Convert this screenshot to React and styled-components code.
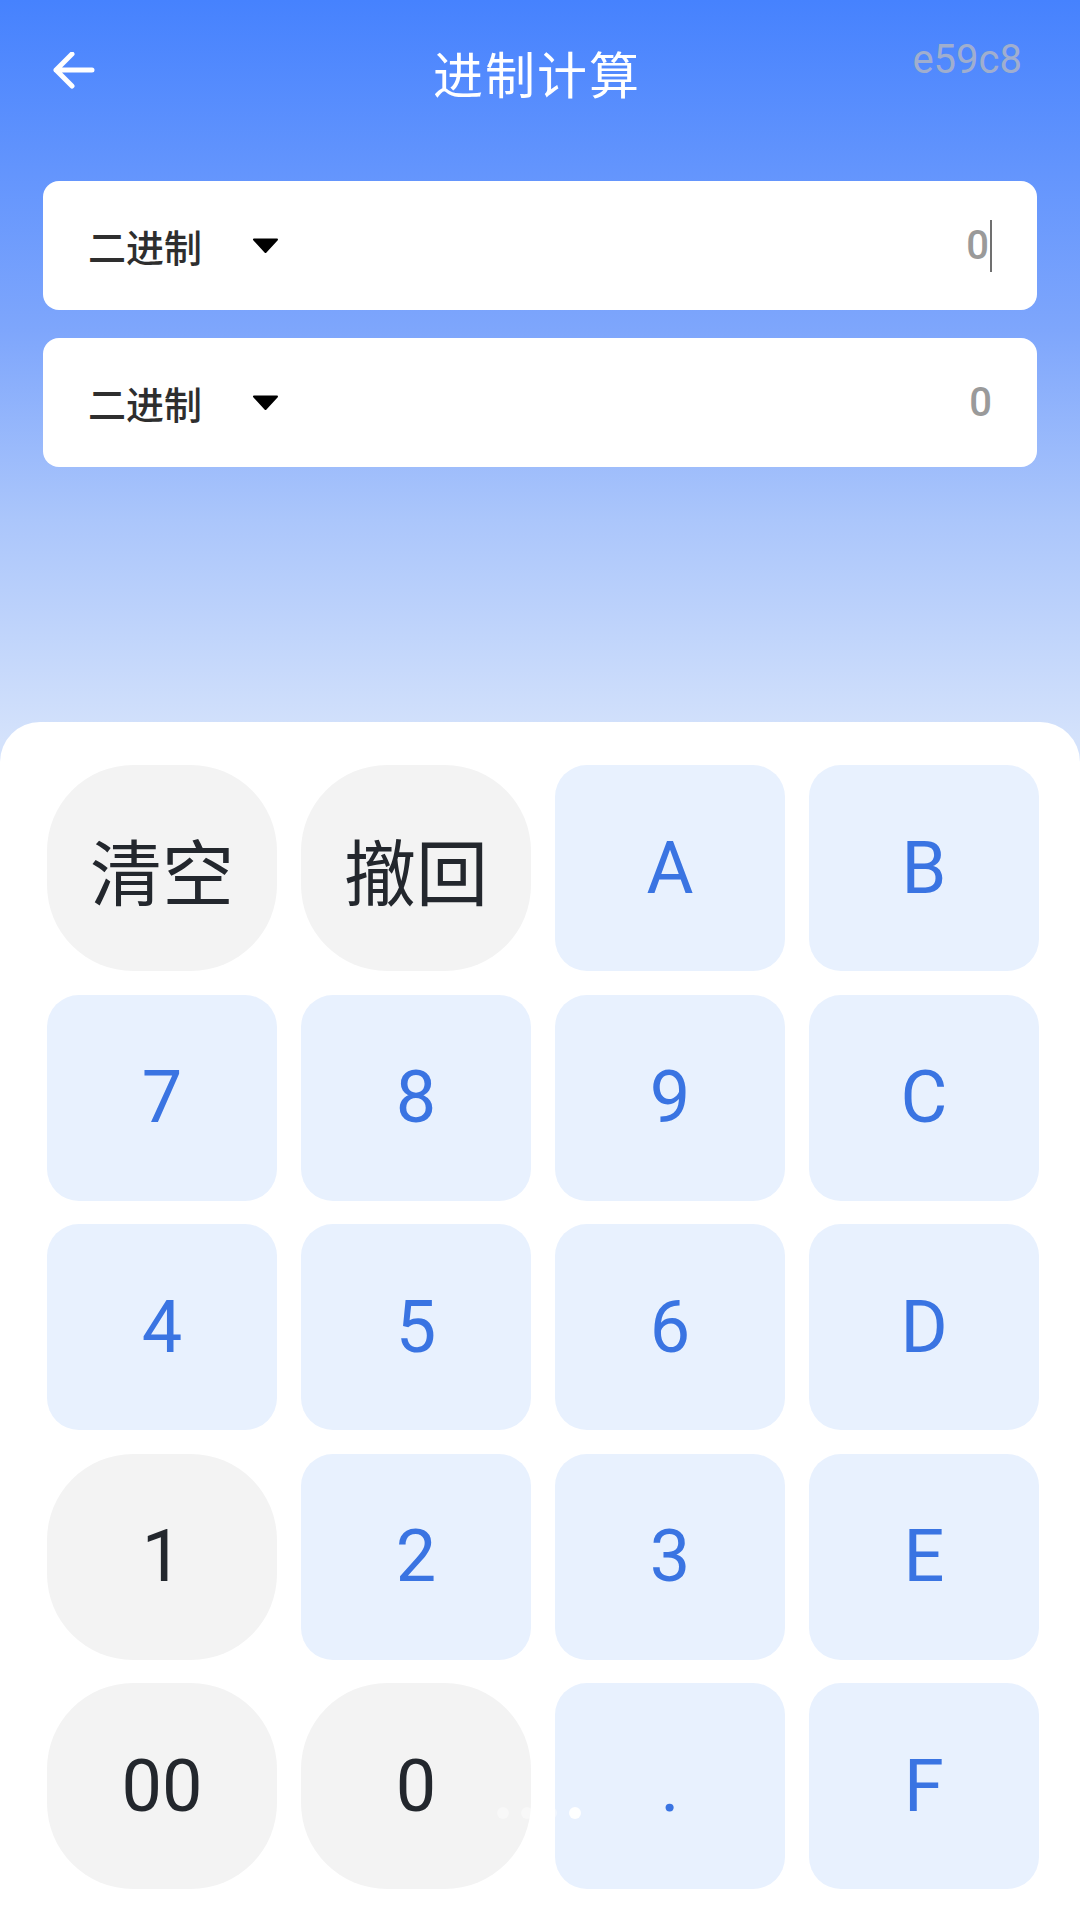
import React from 'react'
import styled, { createGlobalStyle } from 'styled-components'

const GlobalStyle = createGlobalStyle`
  html, body {
    margin: 0;
    padding: 0;
    background: #ffffff;
  }
  * {
    box-sizing: border-box;
  }
`

const Page = styled.div`
  position: relative;
  width: 1080px;
  height: 1920px;
  overflow: hidden;
  display: flex;
  flex-direction: column;
  font-family: Roboto, "Noto Sans CJK SC", sans-serif;
  background: linear-gradient(180deg, #4682fe 0px, #7ea6fc 330px, #abc6fb 520px, #d4e2fb 740px, #d4e2fb 100%);
`

const Header = styled.header`
  display: grid;
  grid-template-columns: 1fr auto 1fr;
  align-items: center;
  height: 143px;
  padding: 0 58px 0 52px;
`

const Back = styled.button`
  justify-self: start;
  width: 44px;
  height: 44px;
  padding: 0;
  border: none;
  background: none;
  display: flex;
  align-items: center;
`

const Title = styled.h1`
  margin: 0;
  font-family: "Noto Sans CJK SC", sans-serif;
  font-size: 50px;
  font-weight: 400;
  color: #ffffff;
  letter-spacing: 2px;
`

const Code = styled.span`
  justify-self: end;
  align-self: start;
  margin-top: 36px;
  font-family: Roboto, sans-serif;
  font-size: 40px;
  color: #a9b3c9;
  opacity: 0.9;
`

const Fields = styled.div`
  display: flex;
  flex-direction: column;
  gap: 28px;
  padding: 38px 43px 0;
`

const Field = styled.div`
  display: flex;
  align-items: center;
  height: 129px;
  padding: 0 45px;
  background: #ffffff;
  border-radius: 16px;
`

const Base = styled.div`
  display: flex;
  align-items: center;
  gap: 50px;
  font-family: "Noto Sans CJK SC", sans-serif;
  font-size: 38px;
  font-weight: 500;
  color: #2e2e2e;
`

const Value = styled.div`
  margin-left: auto;
  display: flex;
  align-items: center;
  font-family: Roboto, sans-serif;
  font-size: 40px;
  font-weight: 500;
  color: #9a9a9a;
`

const Caret = styled.span`
  width: 2px;
  height: 52px;
  margin-left: 1px;
  background: #707070;
`

const Pad = styled.section`
  margin-top: 255px;
  flex: 1;
  background: #ffffff;
  border-radius: 40px 40px 0 0;
  padding: 43px 40px 0 47px;
  display: grid;
  grid-template-columns: repeat(4, 230px);
  grid-auto-rows: 206px;
  column-gap: 24px;
  row-gap: 23.5px;
`

const Key = styled.button`
  border: none;
  padding: 0;
  display: flex;
  align-items: center;
  justify-content: center;
  background: ${p => (p.$gray ? '#f3f3f3' : '#e8f1fe')};
  border-radius: ${p => (p.$gray ? '86px' : '32px')};
  color: ${p => (p.$gray ? '#23272d' : '#3a74e2')};
  font-family: Roboto, "Noto Sans CJK SC", sans-serif;
  font-size: 72px;
  font-weight: 400;
`

const Dots = styled.div`
  position: absolute;
  left: 497px;
  top: 1807px;
  display: flex;
  gap: 12px;
`

const Dot = styled.span`
  width: 12px;
  height: 12px;
  border-radius: 50%;
  background: #ffffff;
  opacity: ${p => (p.$active ? 0.95 : 0.4)};
`

const Arrow = () => (
  <svg width="44" height="40" viewBox="0 0 44 40" fill="none">
    <path d="M40 18H4M20 2L4 18L20 34" stroke="#ffffff" strokeWidth="5" strokeLinecap="round" strokeLinejoin="round" />
  </svg>
)

const Triangle = () => (
  <svg width="27" height="15" viewBox="0 0 27 15">
    <path d="M2 1.5H25L13.5 14Z" fill="#000000" stroke="#000000" strokeWidth="2" strokeLinejoin="round" />
  </svg>
)

const keys = [
  ['清空', true], ['撤回', true], ['A'], ['B'],
  ['7'], ['8'], ['9'], ['C'],
  ['4'], ['5'], ['6'], ['D'],
  ['1', true], ['2'], ['3'], ['E'],
  ['00', true], ['0', true], ['.'], ['F'],
]

export default function App() {
  return (
    <>
      <GlobalStyle />
      <Page>
        <Header>
          <Back aria-label="back">
            <Arrow />
          </Back>
          <Title>进制计算</Title>
          <Code>e59c8</Code>
        </Header>

        <Fields>
          <Field>
            <Base>
              二进制
              <Triangle />
            </Base>
            <Value>
              0<Caret />
            </Value>
          </Field>
          <Field>
            <Base>
              二进制
              <Triangle />
            </Base>
            <Value>0</Value>
          </Field>
        </Fields>

        <Pad>
          {keys.map(([label, gray]) => (
            <Key key={label} $gray={gray}>
              {label}
            </Key>
          ))}
        </Pad>

        <Dots>
          <Dot />
          <Dot />
          <Dot />
          <Dot $active />
        </Dots>
      </Page>
    </>
  )
}
